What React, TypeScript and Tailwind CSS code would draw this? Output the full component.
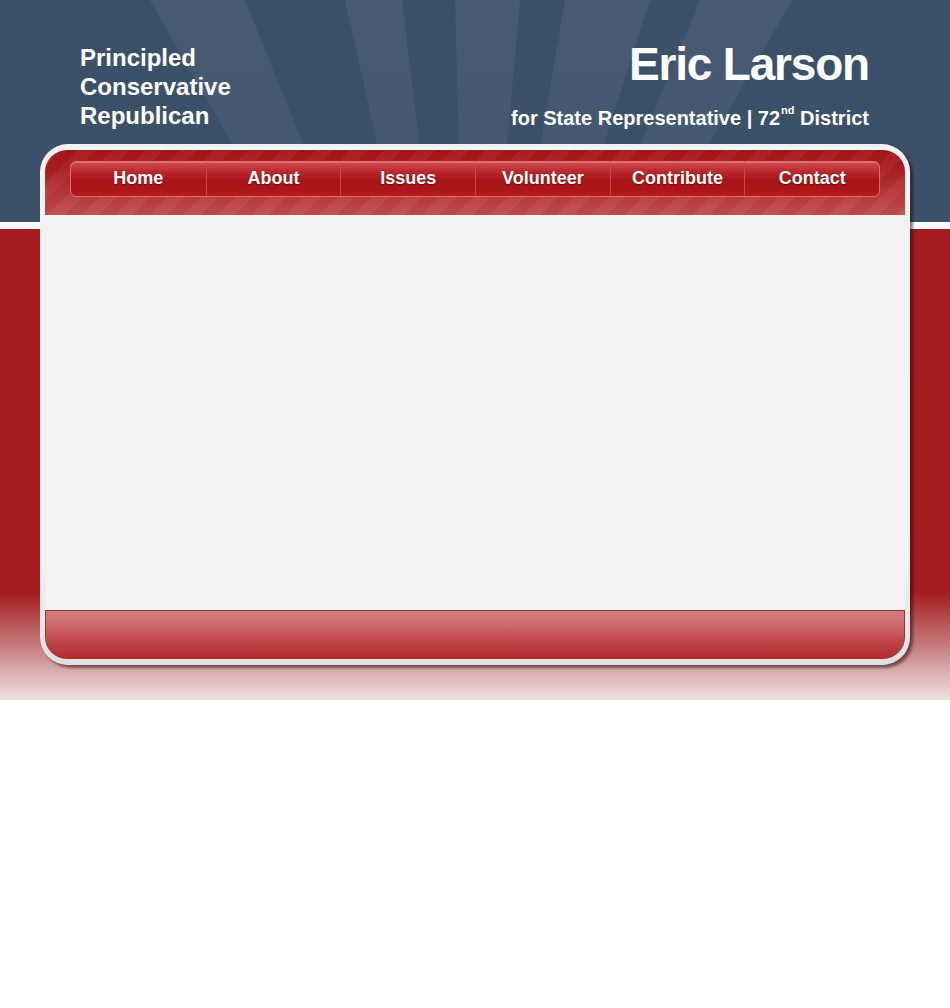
import React from "react";

const navItems = ["Home", "About", "Issues", "Volunteer", "Contribute", "Contact"];

function Rays() {
  const cx = 470;
  const cy = 560;
  const rays: [number, number][] = [
    [150, 245],
    [345, 402],
    [455, 520],
    [565, 650],
    [700, 792],
  ];
  return (
    <svg
      className="absolute left-0 top-0"
      width="950"
      height="222"
      viewBox="0 0 950 222"
      aria-hidden="true"
    >
      <defs>
        <linearGradient id="rayfade" x1="0" y1="0" x2="0" y2="1">
          <stop offset="0" stopColor="#ffffff" stopOpacity="0.06" />
          <stop offset="0.7" stopColor="#ffffff" stopOpacity="0.025" />
          <stop offset="1" stopColor="#ffffff" stopOpacity="0.01" />
        </linearGradient>
      </defs>
      {rays.map(([a, b], i) => (
        <polygon key={i} points={`${a},0 ${b},0 ${cx},${cy}`} fill="url(#rayfade)" />
      ))}
    </svg>
  );
}

export default function App() {
  return (
    <div className="min-h-[1008px] bg-white font-['Liberation_Sans',Arial,sans-serif]">
      <div className="relative h-[700px] bg-[linear-gradient(to_bottom,#3b516a_0px,#3b516a_222px,#ffffff_222px,#ffffff_229px,#a41c1f_229px,#a41c1f_592px,#c88486_650px,#efe3e3_700px)]">
        <Rays />
        <div className="relative">
          {/* Header */}
          <header className="flex h-[144px] justify-between pl-[80px] pr-[81px] text-white">
            <div className="pt-[43px] text-[24px] font-bold leading-[29px]">
              <div>Principled</div>
              <div>Conservative</div>
              <div>Republican</div>
            </div>
            <div className="flex flex-col items-end pt-[41px]">
              <div className="text-[46px] font-bold leading-[46px] tracking-[-1.2px]">Eric Larson</div>
              <div className="mt-[19px] text-[20px] font-bold leading-[24px] tracking-[0px]">
                for State Representative | 72<sup className="ml-[1px] text-[11px] align-[6px]">nd</sup> District
              </div>
            </div>
          </header>

          {/* Card */}
          <div className="ml-[40px] w-[870px] rounded-[28px] bg-[linear-gradient(to_bottom,#f3f3f3,#f1f1f1_80%,#e0e0e0)] px-[5px] pb-[6px] pt-[6px] shadow-[3px_3px_3px_rgba(40,10,10,0.55)]">
            {/* Top red band with nav */}
            <div className="h-[65px] rounded-t-[22px] bg-[repeating-linear-gradient(135deg,rgba(255,255,255,0.04)_0px,rgba(255,255,255,0.04)_12px,rgba(0,0,0,0.025)_12px,rgba(0,0,0,0.025)_24px),linear-gradient(to_bottom,#a5171a_0%,#ab1d20_30%,#b53537_60%,#c24c4d_100%)] px-[25px] pt-[11px]">
              <nav className="flex h-[36px] overflow-hidden rounded-[6px] border border-[#e0676a] bg-[linear-gradient(to_bottom,#cf4c4f_0%,#b8272a_30%,#a81417_55%,#ad1619_85%,#b91d20_100%)] shadow-[inset_0_1px_0_rgba(255,255,255,0.25)]">
                {navItems.map((item, i) => (
                  <div
                    key={item}
                    className={`flex w-[135px] items-center justify-center pb-[1px] text-[18px] font-bold text-white [text-shadow:0_1px_1px_rgba(60,0,0,0.5)] ${
                      i > 0 ? "border-l border-[#c2474a]" : ""
                    }`}
                  >
                    {item}
                  </div>
                ))}
              </nav>
            </div>

            {/* Content */}
            <div className="h-[395px] bg-[#f2f2f2]" />

            {/* Footer */}
            <div className="h-[49px] rounded-b-[22px] border-x border-t border-[#8a3a3b] bg-[linear-gradient(to_bottom,#d67a7d_0%,#d07175_20%,#c1484b_60%,#b02c2e_100%)]" />
          </div>
        </div>
      </div>
    </div>
  );
}
